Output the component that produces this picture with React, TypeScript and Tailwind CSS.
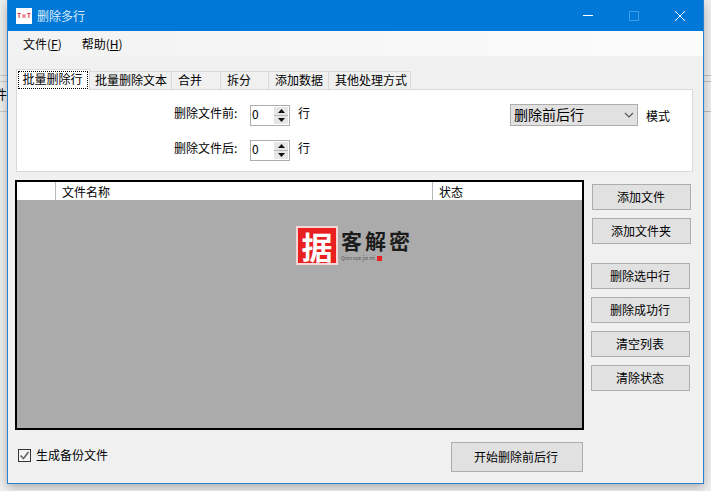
import React from 'react'

const font = { fontFamily: '"Noto Sans CJK SC", "Liberation Sans", sans-serif' }

function Tab({ label, size, active }: { label: string; size: string; active?: boolean }) {
  if (active) {
    return (
      <div className={`relative z-10 -mb-px h-[21px] ${size} border border-b-0 border-[#d9d9d9] bg-white p-[1px]`}>
        <div className="flex h-[18px] items-center justify-center whitespace-nowrap border border-dotted border-black pb-[2px] pr-[1px] text-[12px] leading-none">{label}</div>
      </div>
    )
  }
  return (
    <div className={`mt-[2px] flex h-[18px] ${size} items-center whitespace-nowrap border border-b-0 border-l-0 border-[#d9d9d9] bg-[#f0f0f0] pb-[2px] text-[12px] leading-none`}>
      {label}
    </div>
  )
}

function Spinner() {
  return (
    <div className="flex h-[21px] w-[40px] border border-[#adadad] bg-white pl-[1px]">
      <div className="flex-1 text-[12px] leading-[15px]">0</div>
      <div className="mt-[1px] mr-[1px] flex h-[17px] w-[14px] flex-col gap-[1px] bg-[#b8b8b8]">
        <div className="flex flex-1 items-center justify-center bg-[#e6e6e6]">
          <svg width="7" height="4" viewBox="0 0 7 4"><path d="M3.5 0L7 4H0z" fill="#111" /></svg>
        </div>
        <div className="flex flex-1 items-center justify-center bg-[#e6e6e6]">
          <svg width="7" height="4" viewBox="0 0 7 4"><path d="M0 0h7L3.5 4z" fill="#111" /></svg>
        </div>
      </div>
    </div>
  )
}

function Btn({ label, className }: { label: string; className?: string }) {
  return (
    <div className={`flex h-[26px] w-[99px] items-center justify-center border border-[#adadad] bg-[#e1e1e1] pb-[1px] pr-[1px] text-[12px] leading-none ${className ?? ''}`}>
      {label}
    </div>
  )
}

function Logo() {
  return (
    <div className="flex h-[40px] items-start gap-[3px]">
      <div className="flex h-[39px] w-[42px] items-center justify-center border-[2px] border-[#f4d6d6] bg-[#e8201f] text-[31px] font-bold leading-none text-white">
        据
      </div>
      <div className="flex flex-col pt-[2px]">
        <div className="flex gap-[3px] text-[21px] font-bold leading-[24px] text-[#1c1c1c]">
          <span>客</span>
          <span>解</span>
          <span>密</span>
        </div>
        <div className="mt-[3px] flex items-center gap-[2px] whitespace-nowrap text-[5px] leading-[6px] text-[#555]">
          <span>Qian xue jie mi</span>
          <span className="h-[5px] w-[5px] bg-[#e8201f]" />
        </div>
      </div>
    </div>
  )
}

export default function App() {
  return (
    <div className="relative h-[491px] w-[711px] overflow-hidden bg-[#f0f0f0] text-black" style={font}>
      {/* app behind the dialog */}
      <div className="absolute left-0 top-[75px] h-px w-[7px] bg-[#c8c8c8]" />
      <div className="absolute left-0 top-[81px] h-px w-[7px] bg-[#c8c8c8]" />
      <div className="absolute left-[-6px] top-[85px] text-[13px] leading-[18px]">件</div>
      <div className="absolute left-0 top-[111px] h-px w-[7px] bg-[#c8c8c8]" />
      <div className="absolute right-0 top-[75px] h-px w-[7px] bg-[#c0c0c0]" />
      <div className="absolute right-0 top-[81px] h-px w-[7px] bg-[#c0c0c0]" />
      <div className="absolute right-0 top-[111px] h-px w-[7px] bg-[#c0c0c0]" />

      <div className="absolute left-[7px] top-0 flex h-[484px] w-[697px] flex-col border border-t-0 border-[#2a7fcf] bg-[#f0f0f0] shadow-[0_3px_10px_rgba(0,0,0,0.3)]">
        {/* title bar */}
        <div className="flex h-[31px] items-center bg-[#0078d7] pl-[8px] text-white">
          <div className="flex h-[16px] w-[16px] items-center justify-center bg-white text-[6px] font-bold leading-none text-[#e8201f]">T×T</div>
          <div className="ml-[5px] text-[12px] leading-none text-[#dcecfa]">删除多行</div>
          <div className="ml-auto flex items-center">
            <div className="flex w-[46px] justify-center"><div className="h-px w-[10px] bg-white" /></div>
            <div className="flex w-[46px] justify-center"><div className="h-[10px] w-[10px] border border-[#3f9be3]" /></div>
            <div className="flex w-[46px] justify-center">
              <svg width="10" height="10" viewBox="0 0 10 10"><path d="M0 0L10 10M10 0L0 10" stroke="#fff" strokeWidth="1" /></svg>
            </div>
          </div>
        </div>

        {/* menu */}
        <div className="flex h-[25px] items-center gap-[20px] bg-gradient-to-r from-[#f2f2f2] to-[#fcfcfc] pl-[15px] text-[12px] leading-none">
          <span>文件(<span className="underline">F</span>)</span>
          <span>帮助(<span className="underline">H</span>)</span>
        </div>

        <div className="flex flex-1 flex-col pl-[7px] pr-[10px] pt-[13px]">
          {/* tabs */}
          <div className="flex h-[20px] pl-[1px]">
            <Tab label="批量删除行" size="w-[74px]" active />
            <Tab label="批量删除文本" size="w-[82px] pl-[5px]" />
            <Tab label="合并" size="w-[49px] pl-[6px]" />
            <Tab label="拆分" size="w-[48px] pl-[6px]" />
            <Tab label="添加数据" size="w-[60px] pl-[6px]" />
            <Tab label="其他处理方式" size="w-[82px] pl-[6px]" />
          </div>
          <div className="ml-[1px] flex h-[83px] border border-[#d9d9d9] bg-white text-[12px] leading-none">
            <div className="ml-[157px] flex flex-col gap-[14px] pt-[15px]">
              <div className="flex h-[21px] items-center">
                <span className="w-[76px] pb-[6px]">删除文件前:</span>
                <Spinner />
                <span className="ml-[8px] pb-[6px]">行</span>
              </div>
              <div className="flex h-[21px] items-center">
                <span className="w-[76px] pb-[6px]">删除文件后:</span>
                <Spinner />
                <span className="ml-[8px] pb-[6px]">行</span>
              </div>
            </div>
            <div className="ml-auto mr-[22px] mt-[14px] flex h-[22px] items-center">
              <div className="flex h-[22px] w-[128px] items-center border border-[#adadad] bg-[#e1e1e1] pb-[3px] pl-[3px] pr-[3px] text-[14px]">
                <span>删除前后行</span>
                <svg className="ml-auto mt-[3px]" width="10" height="6" viewBox="0 0 10 6"><path d="M1 1L5 5L9 1" fill="none" stroke="#555" strokeWidth="1.2" /></svg>
              </div>
              <span className="ml-[8px] pt-[2px]">模式</span>
            </div>
          </div>

          {/* list + buttons */}
          <div className="mt-[8px] flex">
            <div className="flex h-[250px] w-[569px] flex-col border-2 border-black bg-[#ababab]">
              <div className="flex h-[18px] bg-white text-[12px] leading-[19px]">
                <div className="w-[39px] border-r border-[#b8b8b8]" />
                <div className="w-[377px] border-r border-[#b8b8b8] pl-[6px]">文件名称</div>
                <div className="flex-1 pl-[6px]">状态</div>
              </div>
              <div className="flex flex-1 pl-[279px] pt-[26px]">
                <Logo />
              </div>
            </div>
            <div className="ml-[7px] flex flex-col pt-[4px]">
              <Btn label="添加文件" className="ml-[1px]" />
              <Btn label="添加文件夹" className="ml-[1px] mt-[8px]" />
              <Btn label="删除选中行" className="mt-[19px]" />
              <Btn label="删除成功行" className="mt-[8px]" />
              <Btn label="清空列表" className="mt-[8px]" />
              <Btn label="清除状态" className="mt-[8px]" />
            </div>
          </div>

          {/* footer */}
          <div className="mt-[12px] flex w-[568px] items-start">
            <div className="ml-[3px] mt-[7px] flex h-[13px] w-[13px] items-center justify-center border border-[#333] bg-[#f4f4f4]">
              <svg width="11" height="11" viewBox="0 0 11 11"><path d="M1.5 5.5L4.5 8.5L9.5 2" fill="none" stroke="#666" strokeWidth="1.6" /></svg>
            </div>
            <span className="ml-[5px] mt-[4px] text-[12px] leading-[17px]">生成备份文件</span>
            <div className="ml-auto flex h-[30px] w-[132px] items-center justify-center border border-[#adadad] bg-[#e1e1e1] pr-[2px] text-[12px] leading-none">开始删除前后行</div>
          </div>
        </div>
      </div>
    </div>
  )
}
